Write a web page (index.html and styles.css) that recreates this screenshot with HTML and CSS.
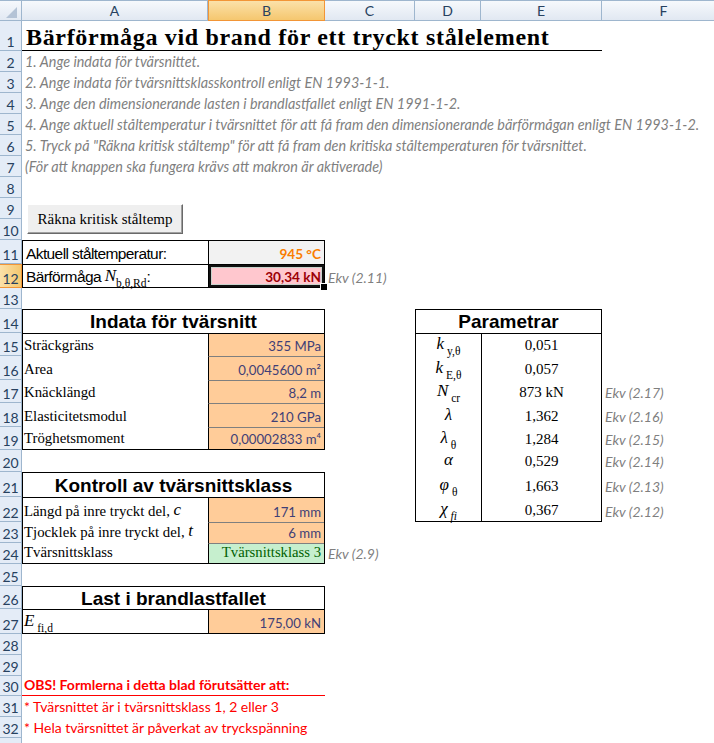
FILE: index.html
```html
<!DOCTYPE html>
<html lang="sv">
<head>
<meta charset="utf-8">
<title>Bärförmåga vid brand</title>
<link rel="stylesheet" href="styles.css">
</head>
<body>
<div class="sheet">
  <div class="corner"><svg width="21" height="20" viewBox="0 0 21 20"><polygon points="17,6 17,17 6,17" fill="#b4c3d6"/></svg></div>
  <div class="colh ca">A</div>
  <div class="colh cb sel">B</div>
  <div class="colh cc">C</div>
  <div class="colh cd">D</div>
  <div class="colh ce">E</div>
  <div class="colh cf">F</div>

  <div class="rh">1</div><div class="rh">2</div><div class="rh">3</div><div class="rh">4</div>
  <div class="rh">5</div><div class="rh">6</div><div class="rh">7</div><div class="rh">8</div>
  <div class="rh">9</div><div class="rh">10</div><div class="rh">11</div><div class="rh sel">12</div>
  <div class="rh">13</div><div class="rh">14</div><div class="rh">15</div><div class="rh">16</div>
  <div class="rh">17</div><div class="rh">18</div><div class="rh">19</div><div class="rh">20</div>
  <div class="rh">21</div><div class="rh">22</div><div class="rh">23</div><div class="rh">24</div>
  <div class="rh">25</div><div class="rh">26</div><div class="rh">27</div><div class="rh">28</div>
  <div class="rh">29</div><div class="rh">30</div><div class="rh">31</div><div class="rh">32</div>
  <div class="rh"></div>

  <div class="title">Bärförmåga vid brand för ett tryckt stålelement</div>
  <div class="note r2">1. Ange indata för tvärsnittet.</div>
  <div class="note r3">2. Ange indata för tvärsnittsklasskontroll enligt EN 1993-1-1.</div>
  <div class="note r4">3. Ange den dimensionerande lasten i brandlastfallet enligt EN 1991-1-2.</div>
  <div class="note r5">4. Ange aktuell ståltemperatur i tvärsnittet för att få fram den dimensionerande bärförmågan enligt EN 1993-1-2.</div>
  <div class="note r6">5. Tryck på "Räkna kritisk ståltemp" för att få fram den kritiska ståltemperaturen för tvärsnittet.</div>
  <div class="note r7">(För att knappen ska fungera krävs att makron är aktiverade)</div>

  <div class="btn-cell"><button class="macro-btn" type="button">Räkna kritisk ståltemp</button></div>

  <div class="tbl t-res">
    <div class="lbl sans">Aktuell ståltemperatur:</div>
    <div class="val calc">945 °C</div>
    <div class="lbl sans first">Bärförmåga&nbsp;<span class="sym">N</span><span class="sub">b,θ,Rd</span>:</div>
    <div class="val bad first selected">30,34 kN</div>
  </div>
  <div class="ekv ekv-c r12">Ekv (2.11)</div>

  <div class="tbl t-in">
    <div class="th">Indata för tvärsnitt</div>
    <div class="lbl first">Sträckgräns</div><div class="val inp first">355 MPa</div>
    <div class="lbl">Area</div><div class="val inp">0,0045600 m²</div>
    <div class="lbl">Knäcklängd</div><div class="val inp">8,2 m</div>
    <div class="lbl">Elasticitetsmodul</div><div class="val inp">210 GPa</div>
    <div class="lbl">Tröghetsmoment</div><div class="val inp">0,00002833 m⁴</div>
  </div>

  <div class="tbl t-par">
    <div class="th">Parametrar</div>
    <div class="psym first"><span class="sym">k</span><span class="sub">&nbsp;y,θ</span></div><div class="pval first">0,051</div>
    <div class="psym"><span class="sym">k</span><span class="sub">&nbsp;E,θ</span></div><div class="pval">0,057</div>
    <div class="psym"><span class="sym">N</span><span class="sub">&nbsp;cr</span></div><div class="pval">873 kN</div>
    <div class="psym"><span class="sym">λ</span></div><div class="pval">1,362</div>
    <div class="psym"><span class="sym">λ</span><span class="sub">&nbsp;θ</span></div><div class="pval">1,284</div>
    <div class="psym"><span class="sym">α</span></div><div class="pval">0,529</div>
    <div class="psym"><span class="sym">φ</span><span class="sub">&nbsp;θ</span></div><div class="pval">1,663</div>
    <div class="psym"><span class="sym">χ</span><span class="sub it">&nbsp;fi</span></div><div class="pval">0,367</div>
  </div>
  <div class="ekv ekv-f r17">Ekv (2.17)</div>
  <div class="ekv ekv-f r18">Ekv (2.16)</div>
  <div class="ekv ekv-f r19">Ekv (2.15)</div>
  <div class="ekv ekv-f r20">Ekv (2.14)</div>
  <div class="ekv ekv-f r21">Ekv (2.13)</div>
  <div class="ekv ekv-f r22">Ekv (2.12)</div>

  <div class="tbl t-kl">
    <div class="th">Kontroll av tvärsnittsklass</div>
    <div class="lbl first">Längd på inre tryckt del,&nbsp;<span class="sym">c</span></div><div class="val inp first">171 mm</div>
    <div class="lbl">Tjocklek på inre tryckt del,&nbsp;<span class="sym">t</span></div><div class="val inp">6 mm</div>
    <div class="lbl">Tvärsnittsklass</div><div class="val good">Tvärsnittsklass 3</div>
  </div>
  <div class="ekv ekv-c r24">Ekv (2.9)</div>

  <div class="tbl t-last">
    <div class="th">Last i brandlastfallet</div>
    <div class="lbl first"><span class="sym">E</span><span class="sub">&nbsp;fi,d</span></div><div class="val inp first">175,00 kN</div>
  </div>

  <div class="warn warn-head">OBS! Formlerna i detta blad förutsätter att:</div>
  <div class="warn r31">* Tvärsnittet är i tvärsnittsklass 1, 2 eller 3</div>
  <div class="warn r32">* Hela tvärsnittet är påverkat av tryckspänning</div>
</div>
</body>
</html>
```

FILE: styles.css
```css
* { box-sizing: border-box; }

html, body {
  margin: 0;
  padding: 0;
  background: #fff;
  overflow: hidden;
}

.sheet {
  display: grid;
  grid-template-columns: 22px 186px 117px 90px 66px 121px 124px;
  grid-template-rows:
    21px 30px repeat(9, 21px)
    24px 24px 21px 24px 23px 24px 23px 24px 23px 22px
    25px 25px 21px 21px 22px 23px 25px 21px 21px 20px
    21px 21px 21px;
  width: 726px;
  height: 743px;
  overflow: hidden;
  font-family: "Liberation Sans", Arial, sans-serif;
  font-size: 16px;
  color: #000;
}

/* ---------- headers ---------- */
.corner {
  grid-row: 1;
  grid-column: 1;
  background: linear-gradient(#f5f8fc, #e2e9f3);
  border-top: 1px solid #9eb6ce;
  border-right: 1px solid #9eb6ce;
  border-bottom: 1px solid #9eb6ce;
}
.corner svg { display: block; }

.colh {
  grid-row: 1;
  display: flex;
  align-items: center;
  justify-content: center;
  background: linear-gradient(#f6f9fc, #e1e8f2);
  border-top: 1px solid #9eb6ce;
  border-right: 1px solid #9eb6ce;
  border-bottom: 1px solid #9eb6ce;
  font-family: "Lato", sans-serif;
  font-size: 14px;
  color: #27415f;
}
.colh.sel {
  background: linear-gradient(#fbe1a9, #f5c76f);
  border-color: #f29536;
  border-left: 1px solid #f29536;
}
.ca { grid-column: 2; }
.cb { grid-column: 3; }
.cc { grid-column: 4; }
.cd { grid-column: 5; }
.ce { grid-column: 6; }
.cf { grid-column: 7; }

.rh {
  grid-column: 1;
  display: flex;
  align-items: flex-end;
  justify-content: center;
  padding-bottom: 0;
  background: #e4ecf7;
  border-right: 1px solid #9eb6ce;
  border-bottom: 1px solid #9eb6ce;
  font-family: "Lato", sans-serif;
  font-size: 14px;
  color: #27415f;
}
.rh.sel {
  background: linear-gradient(90deg, #fbe1a9, #f5c76f);
  border-right-color: #f29536;
  border-bottom-color: #f29536;
  border-top: 1px solid #f29536;
}

/* ---------- row placement ---------- */
.r2 { grid-row: 3; }
.r3 { grid-row: 4; }
.r4 { grid-row: 5; }
.r5 { grid-row: 6; }
.r6 { grid-row: 7; }
.r7 { grid-row: 8; }
.r12 { grid-row: 13; }
.r17 { grid-row: 18; }
.r18 { grid-row: 19; }
.r19 { grid-row: 20; }
.r20 { grid-row: 21; }
.r21 { grid-row: 22; }
.r22 { grid-row: 23; }
.r24 { grid-row: 25; }
.r31 { grid-row: 32; }
.r32 { grid-row: 33; }

/* ---------- title & notes ---------- */
.title {
  grid-row: 2;
  grid-column: 2 / 7;
  display: flex;
  align-items: flex-end;
  padding-left: 4px;
  padding-bottom: 1px;
  border-bottom: 1px solid #000;
  font-family: "Liberation Serif", "Times New Roman", serif;
  font-weight: bold;
  font-size: 24px;
  letter-spacing: 0.68px;
  line-height: 1;
  white-space: nowrap;
}

.note {
  grid-column: 2 / 8;
  display: flex;
  align-items: flex-end;
  padding: 0 0 2px 3px;
  font-family: "Lato", sans-serif;
  font-style: italic;
  font-size: 14.4px;
  color: #7f7f7f;
  white-space: nowrap;
}

/* ---------- button ---------- */
.btn-cell {
  grid-row: 10 / 12;
  grid-column: 2;
  padding: 6px 0 0 5px;
}
.macro-btn {
  display: block;
  width: 156px;
  height: 30px;
  margin: 0;
  padding: 0;
  background: #efefef;
  border: 1px solid;
  border-color: #ffffff #696969 #696969 #ffffff;
  box-shadow: inset -1px -1px 0 #a0a0a0;
  font-family: "Liberation Serif", "Times New Roman", serif;
  font-size: 15px;
  color: #000;
}

/* ---------- tables ---------- */
.tbl {
  display: grid;
  border: 1px solid #000;
  background: #fff;
}
.t-res  { grid-column: 2 / 4; grid-row: 12 / 14; grid-template-columns: 185px 1fr; grid-template-rows: 23px 1fr; }
.t-in   { grid-column: 2 / 4; grid-row: 15 / 21; grid-template-columns: 185px 1fr; grid-template-rows: 23px 23px 24px 23px 24px 1fr; }
.t-kl   { grid-column: 2 / 4; grid-row: 22 / 26; grid-template-columns: 185px 1fr; grid-template-rows: 24px 25px 21px 1fr; }
.t-last { grid-column: 2 / 4; grid-row: 27 / 29; grid-template-columns: 185px 1fr; grid-template-rows: 22px 1fr; }
.t-par  { grid-column: 5 / 7; grid-row: 15 / 24; grid-template-columns: 65px 1fr; grid-template-rows: 23px 23px 24px 23px 24px 23px 22px 25px 1fr; }

.th {
  grid-column: 1 / -1;
  display: flex;
  align-items: center;
  justify-content: center;
  font-family: "Liberation Sans", Arial, sans-serif;
  font-weight: bold;
  font-size: 19px;
  padding-top: 1px;
}

.lbl {
  display: flex;
  align-items: flex-end;
  padding: 0 2px 2px 1px;
  font-family: "Liberation Serif", "Times New Roman", serif;
  font-size: 14.8px;
  white-space: nowrap;
}
.lbl.sans {
  font-family: "Liberation Sans", Arial, sans-serif;
  font-size: 15.5px;
  letter-spacing: -0.6px;
  padding-left: 3px;
  padding-bottom: 1px;
}

.sym {
  font-family: "Liberation Serif", "Times New Roman", serif;
  font-style: italic;
  font-size: 17px;
  letter-spacing: 0;
}
.sub {
  font-family: "Liberation Serif", "Times New Roman", serif;
  font-size: 11.5px;
  letter-spacing: 0;
  position: relative;
  top: 3px;
}
.sub.it { font-style: italic; }

.val {
  display: flex;
  align-items: flex-end;
  justify-content: flex-end;
  padding: 0 3px 2px 3px;
  border-left: 1px solid #000;
  font-family: "Lato", sans-serif;
  font-size: 13.2px;
  color: #3f3f76;
  white-space: nowrap;
}
.inp { background: #ffcc99; border-top: 1px solid #7f7f7f; }
.calc { background: #f2f2f2; color: #fa7d00; font-weight: bold; font-size: 13.6px; }
.bad { background: #ffc7ce; color: #9c0006; font-weight: bold; font-size: 13.6px; }
.good {
  background: #c6efce;
  color: #006100;
  border-top: 1px solid #7f7f7f;
  font-family: "Liberation Serif", "Times New Roman", serif;
  font-size: 14.7px;
  padding-bottom: 2px;
}
.first { border-top: 1px solid #000; }

.selected {
  position: relative;
  box-shadow: inset 0 0 0 2px #111, inset 0 0 0 3px #c9d3cc;
}
.selected::after {
  content: "";
  position: absolute;
  right: -4px;
  bottom: -4px;
  width: 6px;
  height: 6px;
  background: #000;
  border: 1px solid #fff;
}

.psym, .pval {
  display: flex;
  align-items: flex-end;
  justify-content: center;
  padding-bottom: 2px;
  font-family: "Liberation Serif", "Times New Roman", serif;
  font-size: 15px;
  white-space: nowrap;
}
.pval { border-left: 1px solid #000; }

.ekv {
  display: flex;
  align-items: flex-end;
  padding: 0 0 2px 3px;
  font-family: "Lato", sans-serif;
  font-style: italic;
  font-size: 14px;
  color: #7f7f7f;
  white-space: nowrap;
}
.ekv-c { grid-column: 4; }
.ekv-f { grid-column: 7; }

/* ---------- warnings ---------- */
.warn {
  grid-column: 2 / 6;
  display: flex;
  align-items: flex-end;
  padding: 0 0 2px 2px;
  font-family: "Lato", sans-serif;
  font-size: 14px;
  color: #ff0000;
  white-space: nowrap;
}
.warn-head {
  grid-row: 31;
  grid-column: 2 / 4;
  font-weight: bold;
  border-bottom: 1px solid #ff0000;
}
```
